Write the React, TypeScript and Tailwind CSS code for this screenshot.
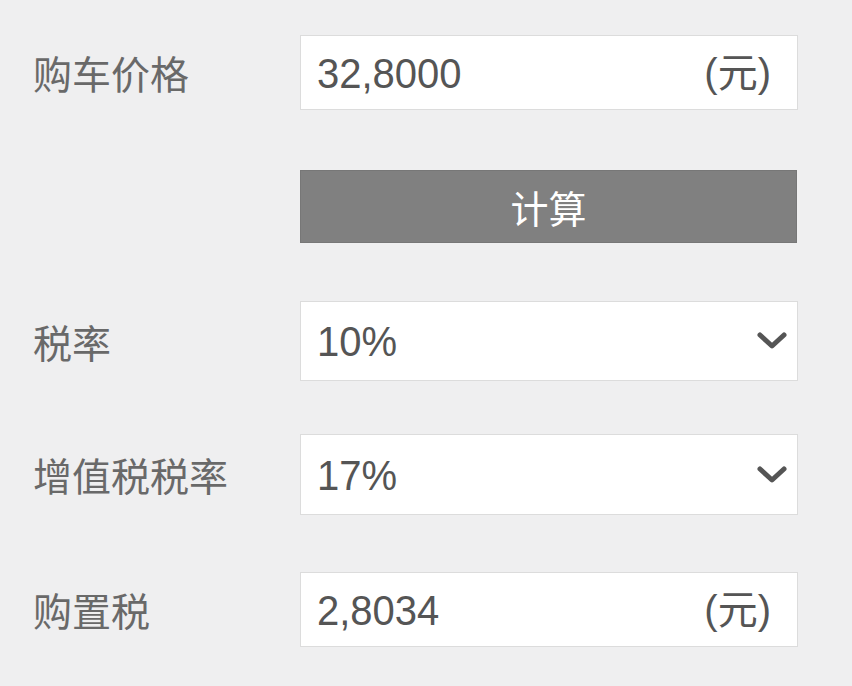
import React from "react";

const font = { fontFamily: '"Liberation Sans", "Noto Sans CJK SC", sans-serif' };

function Chevron() {
  return (
    <svg width="30" height="18" viewBox="0 0 30 18" className="shrink-0">
      <path d="M3 3 L15 14 L27 3" fill="none" stroke="#555" strokeWidth="5" strokeLinecap="round" strokeLinejoin="round" />
    </svg>
  );
}

function Label({ children }: { children: React.ReactNode }) {
  return (
    <div className="w-[267px] shrink-0 text-[39px] leading-none text-[#696969]" style={{ fontFamily: '"Noto Sans CJK SC", sans-serif' }}>
      {children}
    </div>
  );
}

export default function App() {
  return (
    <div className="w-[852px] h-[686px] bg-[#efeff0] overflow-hidden pl-[33px] pt-[35px]" style={font}>
      <div className="flex items-center">
        <Label>购车价格</Label>
        <div className="w-[498px] h-[75px] bg-white border border-[#dcdcdc] flex items-center justify-between pl-[16px] pr-[26px] text-[40px] text-[#555]">
          <span className="inline-block scale-y-[1.08]">32,8000</span>
          <span>(元)</span>
        </div>
      </div>

      <div className="flex mt-[60px]">
        <div className="w-[267px] shrink-0" />
        <div className="w-[497px] h-[73px] bg-[#808080] flex items-center justify-center text-white text-[38px] border border-[#777]" style={{ fontFamily: '"Noto Sans CJK SC", sans-serif' }}>
          计算
        </div>
      </div>

      <div className="flex items-center mt-[58px]">
        <Label>税率</Label>
        <div className="w-[498px] h-[80px] bg-white border border-[#dcdcdc] flex items-center justify-between pl-[16px] pr-[10px] text-[40px] text-[#555]">
          <span className="inline-block scale-y-[1.08]">10%</span>
          <Chevron />
        </div>
      </div>

      <div className="flex items-center mt-[53px]">
        <Label>增值税税率</Label>
        <div className="w-[498px] h-[81px] bg-white border border-[#dcdcdc] flex items-center justify-between pl-[16px] pr-[10px] text-[40px] text-[#555]">
          <span className="inline-block scale-y-[1.08]">17%</span>
          <Chevron />
        </div>
      </div>

      <div className="flex items-center mt-[57px]">
        <Label>购置税</Label>
        <div className="w-[498px] h-[75px] bg-white border border-[#dcdcdc] flex items-center justify-between pl-[16px] pr-[26px] text-[40px] text-[#555]">
          <span className="inline-block scale-y-[1.08]">2,8034</span>
          <span>(元)</span>
        </div>
      </div>
    </div>
  );
}
